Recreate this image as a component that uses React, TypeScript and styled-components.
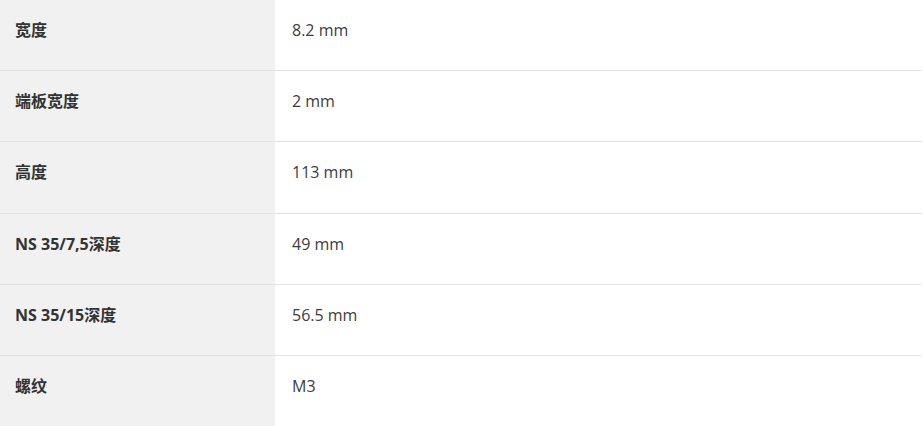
import React from "react";
import styled, { createGlobalStyle } from "styled-components";

const Global = createGlobalStyle`
  html, body { margin: 0; padding: 0; background: #ffffff; }
  body { font-family: "Open Sans", "Noto Sans CJK SC", sans-serif; }
`;

const Table = styled.div`
  width: 922px;
  display: flex;
  flex-direction: column;
`;

const Row = styled.div<{ $last?: boolean }>`
  display: grid;
  grid-template-columns: 275px 1fr;
  height: 70.2px;
  border-bottom: ${(p) => (p.$last ? "none" : "1px solid #e2e2e6")};
`;

const Label = styled.div`
  background: #f1f1f1;
  padding: 19px 0 0 15px;
  font-family: "Open Sans", "Noto Sans CJK SC", sans-serif;
  font-weight: 700;
  font-size: 16px;
  line-height: 22px;
  color: #333333;
`;

const Value = styled.div`
  padding: 19px 0 0 17px;
  font-family: "Open Sans", "Noto Sans CJK SC", sans-serif;
  font-size: 16px;
  line-height: 22px;
  color: #3d3d3d;
`;

const rows: [string, string][] = [
  ["宽度", "8.2 mm"],
  ["端板宽度", "2 mm"],
  ["高度", "113 mm"],
  ["NS 35/7,5深度", "49 mm"],
  ["NS 35/15深度", "56.5 mm"],
  ["螺纹", "M3"],
];

export default function App() {
  return (
    <>
      <Global />
      <Table>
        {rows.map(([k, v], i) => (
          <Row key={k} $last={i === rows.length - 1}>
            <Label>{k}</Label>
            <Value>{v}</Value>
          </Row>
        ))}
      </Table>
    </>
  );
}
